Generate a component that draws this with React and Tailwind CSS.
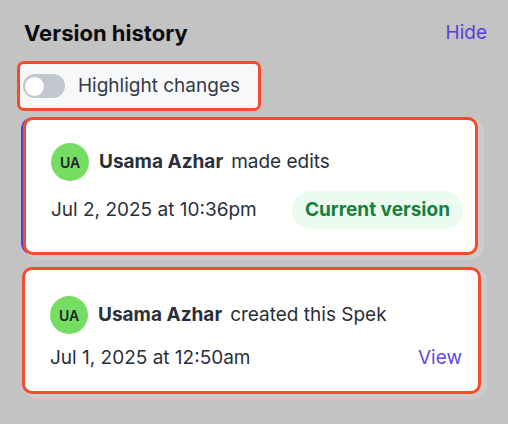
import React from 'react';

const Avatar = ({ initials }) => (
  <div className="w-[38px] h-[38px] rounded-full bg-[#76dd63] flex items-center justify-center text-[14px] font-semibold text-[#1f2430] shrink-0">
    {initials}
  </div>
);

const VersionCard = ({ action, date, current, className = '' }) => (
  <div className={`rounded-[12px] shadow-[4px_3px_0_2px_#cbcbcb] ${className}`}>
    <div
      className={`rounded-[10px] border-[3px] border-[#f44b2a] bg-white pl-[25px] ${
        current ? 'pr-[12px] pt-[23px] pb-[23px]' : 'pr-[16px] pt-[26px] pb-[19px]'
      }`}
    >
      <div className="flex items-center gap-[10px]">
        <Avatar initials="UA" />
        <p className="text-[19px] leading-[28px] text-[#2a2f3a]">
          <span className="font-bold">Usama Azhar</span>
          <span className="ml-[8px]">{action}</span>
        </p>
      </div>
      <div className={`mt-[10px] flex items-center justify-between ${current ? 'h-[38px]' : 'h-[28px]'}`}>
        <span className="text-[19px] leading-[28px] text-[#2a2f3a]">{date}</span>
        {current ? (
          <span className="rounded-full bg-[#ebfbef] px-[13px] h-[38px] flex items-center text-[19px] font-bold text-[#16803f]">
            Current version
          </span>
        ) : (
          <button className="text-[19px] leading-[28px] text-[#6547e8]">View</button>
        )}
      </div>
    </div>
  </div>
);

export default function App() {
  return (
    <div
      className="w-[508px] h-[424px] bg-[#c3c3c3] pl-6 pr-[21px] pt-[18px]"
      style={{ fontFamily: 'Inter, "Noto Sans", sans-serif' }}
    >
      {/* Header */}
      <div className="flex items-center justify-between h-[30px]">
        <h2 className="text-[22px] leading-[30px] font-bold text-[#0b0b0f]">Version history</h2>
        <button className="text-[19px] leading-[28px] text-[#5b3fd4]">Hide</button>
      </div>

      {/* Highlight toggle */}
      <div className="mt-[13px] -ml-[7px] w-[244px] h-[50px] rounded-[7px] border-[3px] border-[#f44b2a] bg-[#f7f8fa] flex items-center gap-[13px] pl-[3px]">
        <div className="w-[42px] h-[24px] rounded-full bg-[#c2c7cf] flex items-center px-[2px]">
          <div className="w-[19px] h-[19px] rounded-full bg-white" />
        </div>
        <span className="text-[19px] leading-[26px] text-[#343a46]">Highlight changes</span>
      </div>

      {/* Version list */}
      <div className="mt-[6px] -ml-[2px] flex flex-col gap-[12px]">
        <div className="border-l-2 border-[#5a3fd0] rounded-[12px] -ml-[1px] w-[457px]">
          <VersionCard action="made edits" date="Jul 2, 2025 at 10:36pm" current />
        </div>
        <VersionCard className="w-[459px]" action="created this Spek" date="Jul 1, 2025 at 12:50am" />
      </div>
    </div>
  );
}
